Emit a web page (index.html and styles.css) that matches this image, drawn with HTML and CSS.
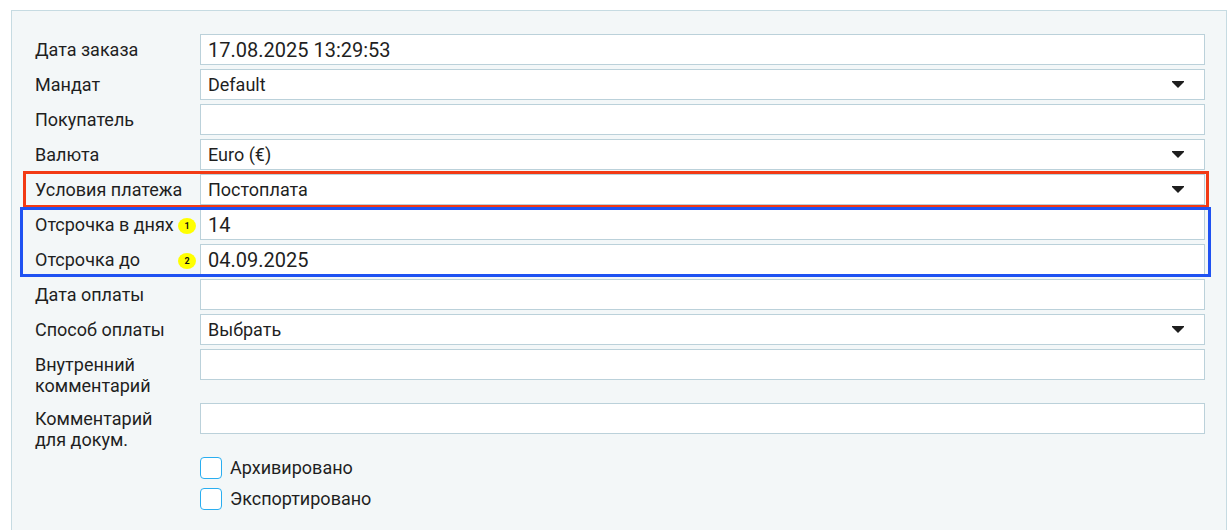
FILE: index.html
```html
<!DOCTYPE html>
<html lang="ru">
<head>
<meta charset="utf-8">
<title>Заказ</title>
<link rel="stylesheet" href="styles.css">
</head>
<body>
<div class="panel">
  <div class="form">
    <div class="row">
      <div class="label">Дата заказа</div>
      <div class="field text big">17.08.2025 13:29:53</div>
    </div>
    <div class="row">
      <div class="label">Мандат</div>
      <div class="field select"><span>Default</span><svg class="caret" width="12" height="7" viewBox="0 0 12 7"><path d="M0 0H12V1L6 7L0 1Z" fill="#1e1e1e"/></svg></div>
    </div>
    <div class="row">
      <div class="label">Покупатель</div>
      <div class="field text"></div>
    </div>
    <div class="row">
      <div class="label">Валюта</div>
      <div class="field select"><span>Euro (€)</span><svg class="caret" width="12" height="7" viewBox="0 0 12 7"><path d="M0 0H12V1L6 7L0 1Z" fill="#1e1e1e"/></svg></div>
    </div>
    <div class="mark mark-red">
      <div class="row">
        <div class="label">Условия платежа</div>
        <div class="field select"><span>Постоплата</span><svg class="caret" width="12" height="7" viewBox="0 0 12 7"><path d="M0 0H12V1L6 7L0 1Z" fill="#1e1e1e"/></svg></div>
      </div>
    </div>
    <div class="mark mark-blue">
      <div class="row">
        <div class="label label-badge"><span>Отсрочка в днях</span><span class="badge">1</span></div>
        <div class="field text big">14</div>
      </div>
      <div class="row">
        <div class="label label-badge"><span>Отсрочка до</span><span class="badge">2</span></div>
        <div class="field text big">04.09.2025</div>
      </div>
    </div>
    <div class="row">
      <div class="label">Дата оплаты</div>
      <div class="field text"></div>
    </div>
    <div class="row">
      <div class="label">Способ оплаты</div>
      <div class="field select"><span>Выбрать</span><svg class="caret" width="12" height="7" viewBox="0 0 12 7"><path d="M0 0H12V1L6 7L0 1Z" fill="#1e1e1e"/></svg></div>
    </div>
    <div class="row">
      <div class="label">Внутренний<br>комментарий</div>
      <div class="field text"></div>
    </div>
    <div class="row">
      <div class="label">Комментарий<br>для докум.</div>
      <div class="field text"></div>
    </div>
    <div class="checks">
      <label class="check"><span class="box"></span><span>Архивировано</span></label>
      <label class="check"><span class="box"></span><span>Экспортировано</span></label>
    </div>
  </div>
</div>
</body>
</html>
```

FILE: styles.css
```css
html, body {
  margin: 0;
  padding: 0;
  background: #ffffff;
}
body {
  font-family: Roboto, "Noto Sans", "Liberation Sans", sans-serif;
  color: #1f1f1f;
  padding: 10px 0 0 11px;
}
.panel {
  width: 1216px;
  background: #f3f7f8;
  border: 1px solid #c6dbe2;
  padding: 23px 21px 40px 23px;
  box-sizing: border-box;
}
.form {
  display: flex;
  flex-direction: column;
  gap: 4px;
}
.mark {
  display: flex;
  flex-direction: column;
  gap: 4px;
  position: relative;
}
.mark::after {
  content: "";
  position: absolute;
  pointer-events: none;
}
.mark-red::after {
  left: -12px;
  right: -4px;
  top: -3px;
  bottom: -3px;
  border: 3px solid #f23a14;
}
.mark-blue::after {
  left: -15px;
  right: -6px;
  top: -2px;
  bottom: -2px;
  border: 3px solid #1f52f2;
}
.row {
  display: flex;
  align-items: flex-start;
}
.label {
  width: 165px;
  flex: none;
  box-sizing: border-box;
  padding-top: 5px;
  padding-bottom: 3px;
  font-size: 18px;
  line-height: 21px;
}
.label-badge {
  display: flex;
  align-items: center;
  justify-content: space-between;
  padding-right: 4px;
}
.badge {
  width: 18px;
  height: 16px;
  border-radius: 50%;
  background: #ffff00;
  font-size: 9px;
  font-weight: 700;
  line-height: 16px;
  text-align: center;
  color: #111;
  margin-top: 3px;
}
.field {
  flex: 1;
  height: 31px;
  box-sizing: border-box;
  background: #ffffff;
  border: 1px solid #bbd1da;
  padding: 0 7px;
  display: flex;
  align-items: center;
  font-size: 18px;
}
.field.big {
  font-size: 20px;
}
.select {
  justify-content: space-between;
  padding-right: 20px;
}
.caret {
  display: block;
  flex: none;
}
.checks {
  display: flex;
  flex-direction: column;
  gap: 9px;
  padding-left: 165px;
}
.check {
  display: flex;
  align-items: center;
  gap: 8px;
  font-size: 18px;
  line-height: 22px;
}
.box {
  width: 22px;
  height: 22px;
  box-sizing: border-box;
  border: 1.5px solid #2aaef0;
  border-radius: 4px;
  background: #ffffff;
}
```
